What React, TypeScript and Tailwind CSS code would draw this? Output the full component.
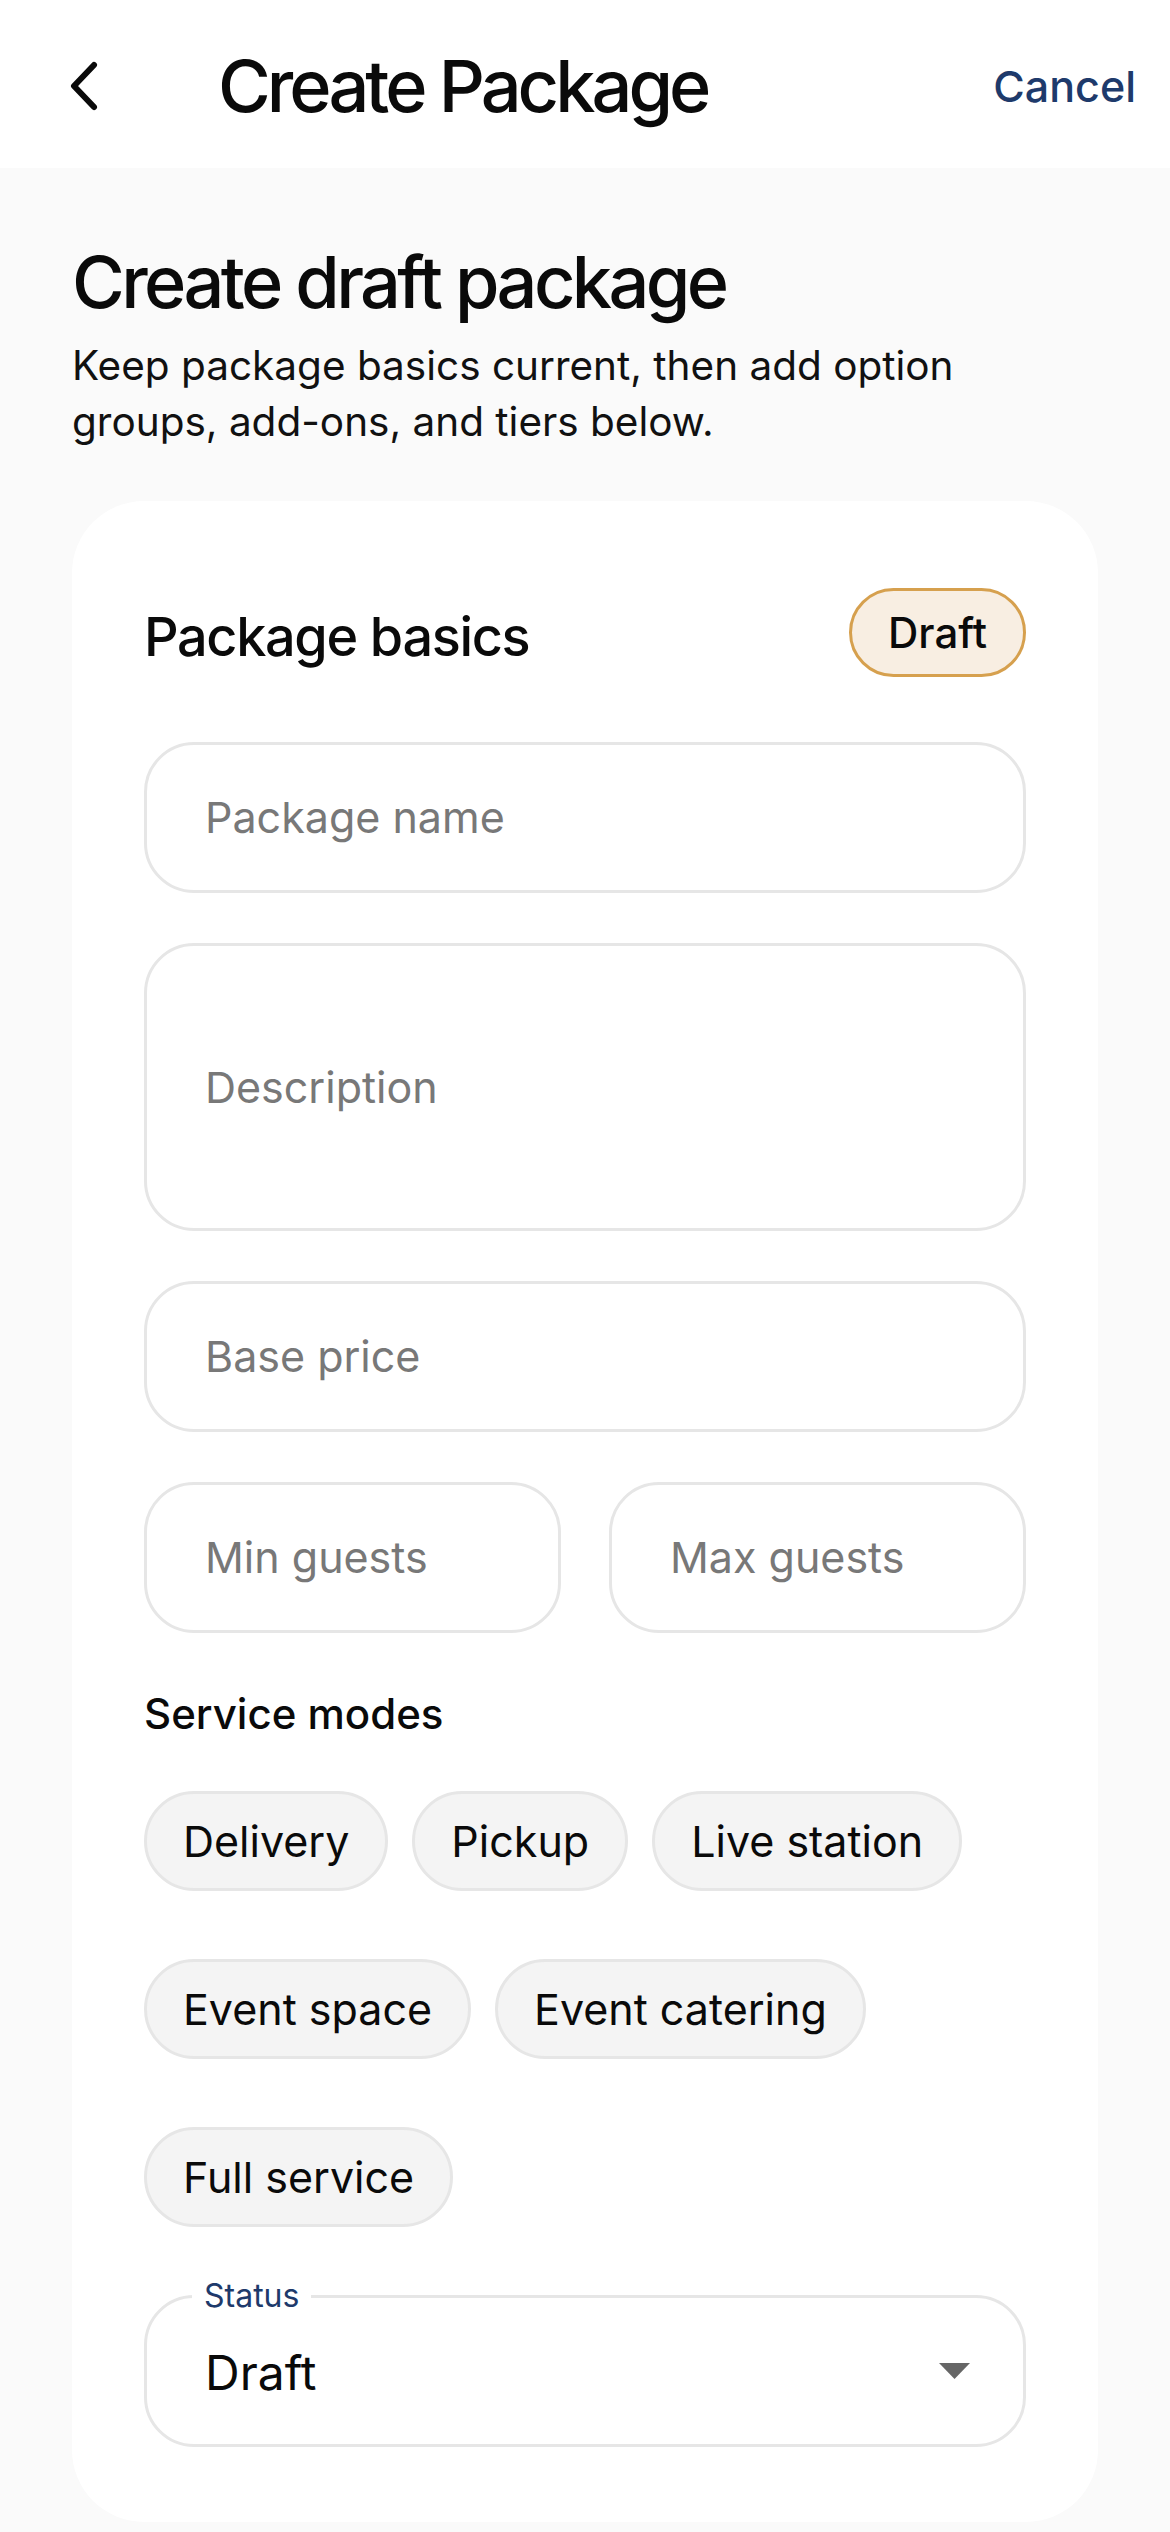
import React from 'react';

const modes = ['Delivery', 'Pickup', 'Live station', 'Event space', 'Event catering', 'Full service'];

function Field({ label, height }: { label: string; height: string }) {
    return (
        <div
            className={`flex items-center rounded-[50px] border-[3px] border-[#e6e6e6] bg-white pl-[58px] text-[43px] text-[#787878] ${height}`}
        >
            {label}
        </div>
    );
}

export default function App() {
    return (
        <div className="min-h-[2532px] bg-[#fafafa] font-[Inter,_sans-serif] text-[#0a0a0a]">
            {/* top bar */}
            <header className="flex h-[168px] items-center bg-white pl-[68px] pr-[34px] pt-[4px]">
                <svg width="32" height="52" viewBox="0 0 32 52" fill="none">
                    <path d="M26 5 L6 26 L26 47" stroke="#0a0a0a" strokeWidth="6" strokeLinecap="round" strokeLinejoin="round" />
                </svg>
                <h1 className="ml-[118px] flex-1 text-[72px] font-medium leading-[86px] tracking-[-0.055em]">Create Package</h1>
                <button className="text-[43px] font-medium leading-[54px] text-[#1e3a6b]">Cancel</button>
            </header>

            <main className="px-[72px] pt-[72px]">
                <h2 className="text-[72px] font-medium leading-[84px] tracking-[-0.05em]">Create draft package</h2>
                <p className="mt-[14px] text-[40.5px] leading-[56px] text-[#111]">
                    Keep package basics current, then add option groups, add-ons, and tiers below.
                </p>

                <section className="mt-[51px] flex flex-col gap-[50px] rounded-[72px] bg-white px-[72px] pb-[75px] pt-[72px]">
                    <div className="flex h-[119px] items-center justify-between">
                        <h3 className="pt-[8px] text-[54px] font-medium leading-[64px] tracking-[-0.025em]">Package basics</h3>
                        <span className="flex h-[89px] items-center rounded-full border-[3px] border-[#d6a04e] bg-[#f8eee2] px-[36px] text-[42px] font-medium">
                            Draft
                        </span>
                    </div>

                    <Field label="Package name" height="h-[151px]" />
                    <Field label="Description" height="h-[288px]" />
                    <Field label="Base price" height="h-[151px]" />

                    <div className="grid grid-cols-2 gap-[48px]">
                        <Field label="Min guests" height="h-[151px]" />
                        <Field label="Max guests" height="h-[151px]" />
                    </div>

                    <div className="pt-[4px] text-[42px] font-medium leading-[54px]">Service modes</div>

                    <div className="flex flex-wrap gap-x-[24px] gap-y-[68px]">
                        {modes.map((m) => (
                            <span
                                key={m}
                                className="flex h-[100px] items-center rounded-full border-[3px] border-[#e6e6e6] bg-[#f4f4f4] px-[36px] text-[43px]"
                            >
                                {m}
                            </span>
                        ))}
                    </div>

                    <div className="relative mt-[18px] flex h-[152px] items-center rounded-[50px] border-[3px] border-[#e6e6e6] bg-white pl-[58px] pr-[53px]">
                        <span className="absolute -top-[20px] left-[45px] bg-white px-[12px] text-[32px] leading-[36px] text-[#1e3a6b]">
                            Status
                        </span>
                        <span className="flex-1 pt-[4px] text-[48px]">Draft</span>
                        <svg width="31" height="16" viewBox="0 0 31 16">
                            <path d="M0 0 H31 L15.5 16 Z" fill="#666" />
                        </svg>
                    </div>
                </section>
            </main>
        </div>
    );
}
